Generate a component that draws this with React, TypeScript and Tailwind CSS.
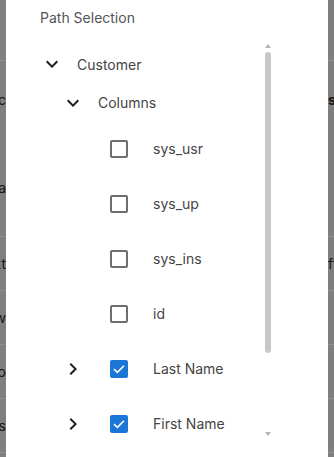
import React from 'react';

type Item = { label: string; checked: boolean; expandable: boolean };

const items: Item[] = [
  { label: 'sys_usr', checked: false, expandable: false },
  { label: 'sys_up', checked: false, expandable: false },
  { label: 'sys_ins', checked: false, expandable: false },
  { label: 'id', checked: false, expandable: false },
  { label: 'Last Name', checked: true, expandable: true },
  { label: 'First Name', checked: true, expandable: true },
];

const ExpandMore = () => (
  <svg width="24" height="24" viewBox="0 0 24 24" className="shrink-0">
    <path d="M16.59 8.59 12 13.17 7.41 8.59 6 10l6 6 6-6z" fill="#1f1f1f" />
  </svg>
);

const ChevronRight = () => (
  <svg width="24" height="24" viewBox="0 0 24 24" className="shrink-0">
    <path d="M10 6 8.59 7.41 13.17 12l-4.58 4.59L10 18l6-6z" fill="#1f1f1f" />
  </svg>
);

const Checkbox: React.FC<{ checked: boolean }> = ({ checked }) =>
  checked ? (
    <div className="w-[18px] h-[18px] rounded-[2px] bg-[#1b77d6] flex items-center justify-center shrink-0">
      <svg width="18" height="18" viewBox="0 0 18 18">
        <path d="M4 9.2 7.4 12.4 14 5.8" fill="none" stroke="#fff" strokeWidth="1.6" />
      </svg>
    </div>
  ) : (
    <div className="w-[18px] h-[18px] rounded-[2px] border-2 border-[#6e6e6e] shrink-0" />
  );

// what's left visible of the page behind the dialog
const Edge: React.FC<{ left?: string; right?: string; bold?: boolean }> = ({ left, right, bold }) => (
  <div className="flex justify-between items-center w-full h-[20px]">
    <div className="w-[6px] overflow-hidden flex justify-end">
      <span className="whitespace-nowrap text-[#151515]">{left}</span>
    </div>
    <div className="w-[6px] overflow-hidden flex justify-start">
      <span className={`whitespace-nowrap text-[#151515] ${bold ? 'font-bold' : ''}`}>{right}</span>
    </div>
  </div>
);

const Backdrop = () => (
  <div className="flex flex-col w-full h-full bg-[#7f7f7f] text-[14px] leading-[20px]">
    <div className="h-[61px] border-b border-[#8e8e8e]" />
    <div className="h-[176px] border-b border-[#8e8e8e] flex flex-col">
      <div className="h-[29px] shrink-0" />
      <Edge left="Sync" right="sta" bold />
      <div className="h-[68px] shrink-0" />
      <Edge left="Data" />
    </div>
    <div className="h-[54px] border-b border-[#8e8e8e] flex items-center">
      <Edge left="Text" right="ff" />
    </div>
    <div className="h-[54px] border-b border-[#8e8e8e] flex items-center">
      <Edge left="New" />
    </div>
    <div className="h-[54px] border-b border-[#8e8e8e] flex items-center">
      <Edge left="Info" />
    </div>
    <div className="h-[54px] border-b border-[#8e8e8e] flex items-center">
      <Edge left="This" />
    </div>
  </div>
);

export default function App() {
  return (
    <div
      className="relative w-full h-[457px] overflow-hidden"
      style={{ fontFamily: 'Inter, "Noto Sans", sans-serif' }}
    >
      <Backdrop />

      <div className="absolute top-0 bottom-0 left-[6px] right-[6px] bg-white flex flex-col">
        <div className="pl-[34px] pt-[8px] h-[40px] text-[14px] leading-[20px] text-[#555]">
          Path Selection
        </div>

        <div className="flex w-[268px] h-[401px]">
          <div className="flex-1 overflow-hidden text-[14px] text-[#444] pt-[4px]">
            <div className="h-[40px] flex items-center pl-[34px] gap-[13px]">
              <ExpandMore />
              <span>Customer</span>
            </div>
            <div className="h-[37px] flex items-center pl-[55px] gap-[13px]">
              <ExpandMore />
              <span>Columns</span>
            </div>
            {items.map((it) => (
              <div key={it.label} className="h-[55px] flex items-center pl-[55px] shrink-0">
                {it.expandable ? <ChevronRight /> : <div className="w-[24px] shrink-0" />}
                <div className="ml-[25px]">
                  <Checkbox checked={it.checked} />
                </div>
                <span className="ml-[25px] whitespace-nowrap">{it.label}</span>
              </div>
            ))}
          </div>

          <div className="w-[12px] flex flex-col items-center">
            <svg width="6" height="4" viewBox="0 0 6 4" className="mt-[4px]">
              <path d="M0 4 3 0 6 4z" fill="#b3b3b3" />
            </svg>
            <div className="mt-[4px] w-[6px] h-[301px] rounded-full bg-[#c8c8c8]" />
            <svg width="6" height="4" viewBox="0 0 6 4" className="mt-auto mb-[5px]">
              <path d="M0 0 3 4 6 0z" fill="#b3b3b3" />
            </svg>
          </div>
        </div>
      </div>
    </div>
  );
}
